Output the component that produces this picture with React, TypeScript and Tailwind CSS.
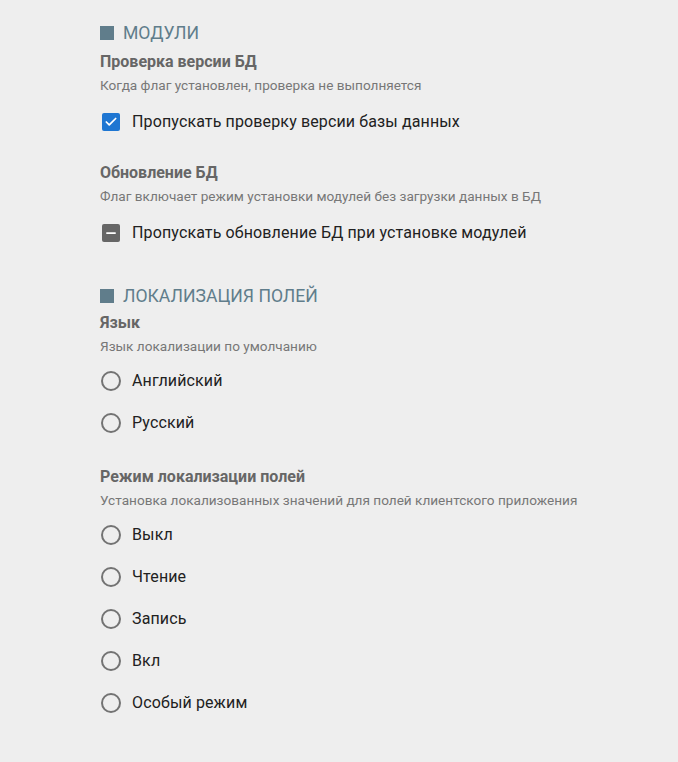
import { Check, Minus } from "lucide-react";

const font = { fontFamily: "Roboto, 'Noto Sans', sans-serif" };

function SectionHeading({ children }: { children: string }) {
    return (
        <div className="flex items-center h-6 gap-[9px]">
            <span className="w-[14px] h-[14px] bg-[#607d8b]" />
            <span className="text-[17.6px] text-[#607d8b] leading-6">{children}</span>
        </div>
    );
}

function FieldHeader({ title, description }: { title: string; description: string }) {
    return (
        <div className="flex flex-col">
            <div className="h-5 leading-5 text-[16px] font-bold text-[#666666]">{title}</div>
            <div className="mt-[5px] h-4 leading-4 text-[13.6px] text-[#777777]">{description}</div>
        </div>
    );
}

function CheckboxRow({ label, state }: { label: string; state: "checked" | "indeterminate" }) {
    return (
        <label className="flex items-center h-[42px] gap-3 cursor-pointer">
            <span className="ml-[2px] w-[18px] h-[18px] rounded-[2px] flex items-center justify-center bg-[#1e76d2] data-[s=indeterminate]:bg-[#666666]" data-s={state}>
                {state === "checked" ? (
                    <Check size={14} strokeWidth={3} className="text-white" />
                ) : (
                    <Minus size={14} strokeWidth={3} className="text-white" />
                )}
            </span>
            <span className="text-[16px] tracking-[0.13px] text-[#212121]">{label}</span>
        </label>
    );
}

function RadioRow({ label }: { label: string }) {
    return (
        <label className="flex items-center h-[42px] gap-[11px] cursor-pointer">
            <span className="ml-px w-5 h-5 rounded-full border-2 border-[#737373]" />
            <span className="text-[16px] tracking-[0.13px] text-[#212121]">{label}</span>
        </label>
    );
}

export default function App() {
    return (
        <div className="min-h-[762px] bg-[#eeeeee] pl-[100px] pt-[21px]" style={font}>
            <SectionHeading>МОДУЛИ</SectionHeading>
            <div className="mt-[7px]">
                <FieldHeader title="Проверка версии БД" description="Когда флаг установлен, проверка не выполняется" />
            </div>
            <div className="mt-[8px]">
                <CheckboxRow label="Пропускать проверку версии базы данных" state="checked" />
            </div>
            <div className="mt-[20px]">
                <FieldHeader title="Обновление БД" description="Флаг включает режим установки модулей без загрузки данных в БД" />
            </div>
            <div className="mt-[8px]">
                <CheckboxRow label="Пропускать обновление БД при установке модулей" state="indeterminate" />
            </div>

            <div className="mt-[30px]">
                <SectionHeading>ЛОКАЛИЗАЦИЯ ПОЛЕЙ</SectionHeading>
            </div>
            <div className="mt-[5px]">
                <FieldHeader title="Язык" description="Язык локализации по умолчанию" />
            </div>
            <div className="mt-[6px] flex flex-col">
                <RadioRow label="Английский" />
                <RadioRow label="Русский" />
            </div>
            <div className="mt-[23px]">
                <FieldHeader title="Режим локализации полей" description="Установка локализованных значений для полей клиентского приложения" />
            </div>
            <div className="mt-[6px] flex flex-col">
                <RadioRow label="Выкл" />
                <RadioRow label="Чтение" />
                <RadioRow label="Запись" />
                <RadioRow label="Вкл" />
                <RadioRow label="Особый режим" />
            </div>
        </div>
    );
}
